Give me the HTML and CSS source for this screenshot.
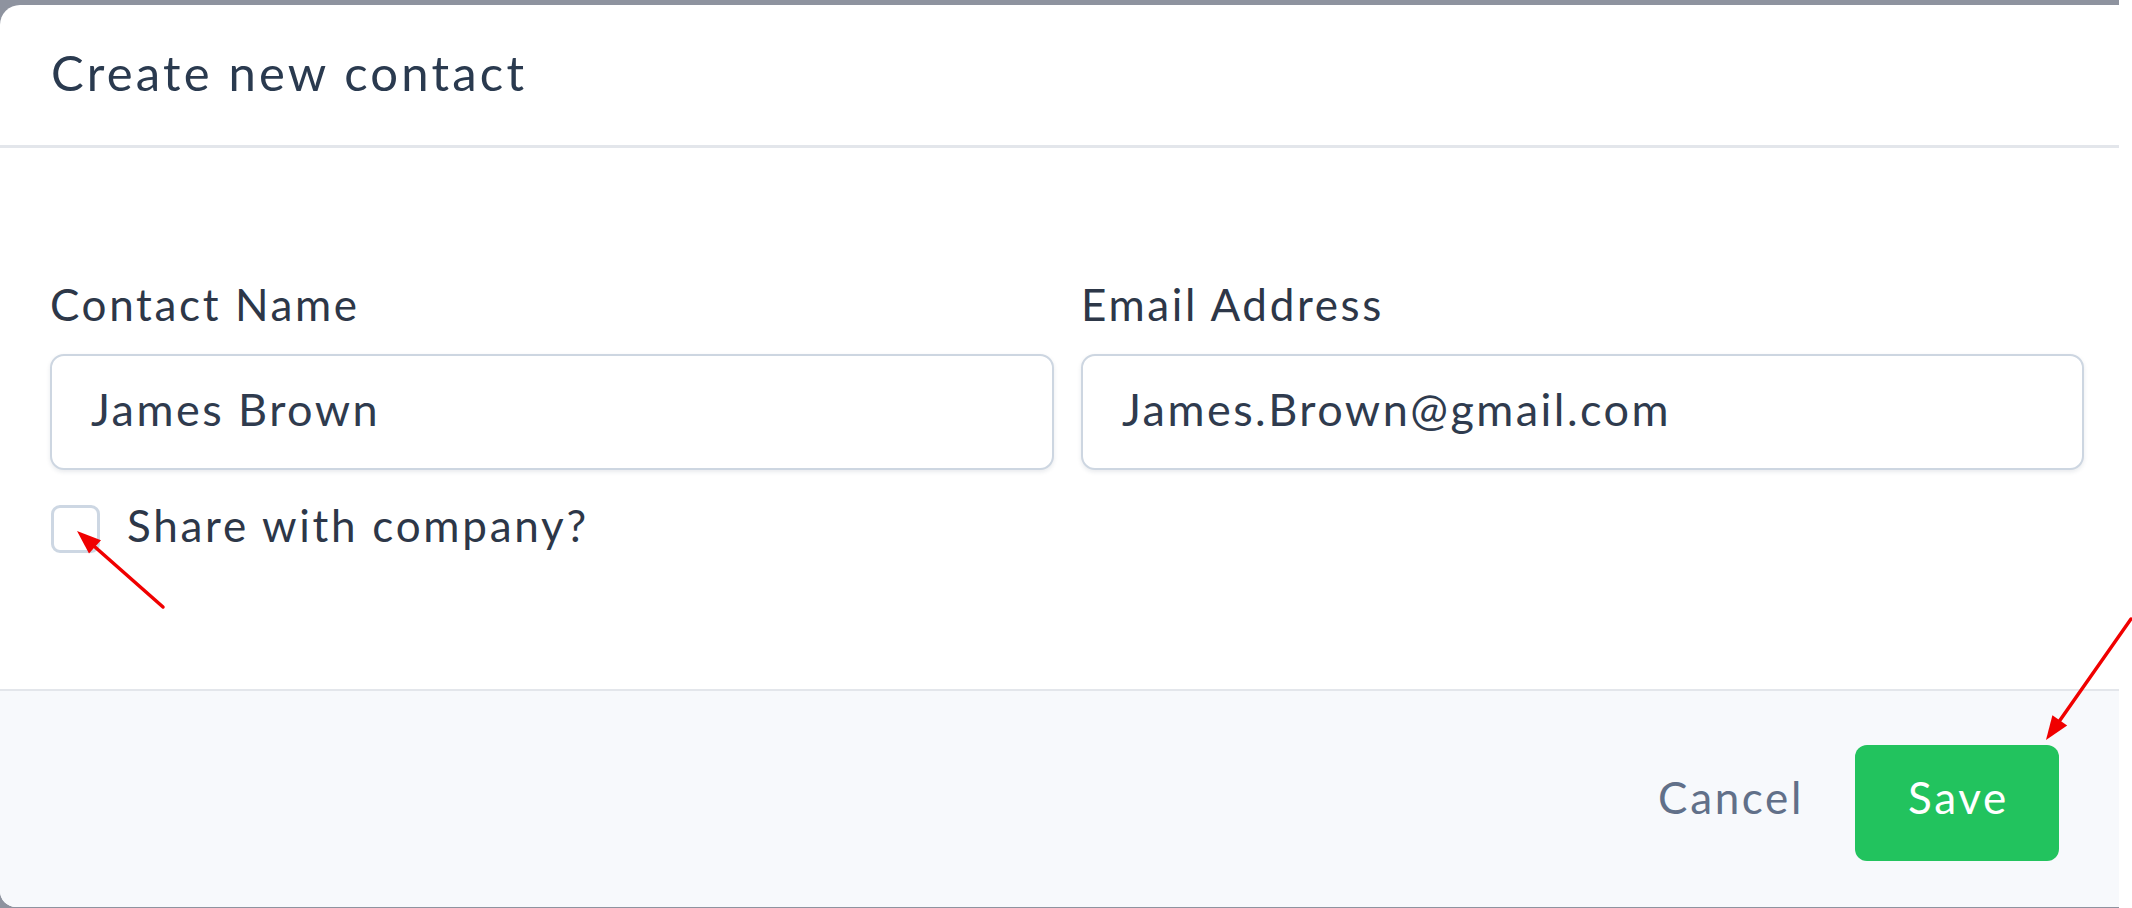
FILE: index.html
```html
<!DOCTYPE html>
<html lang="en">
<head>
<meta charset="utf-8">
<title>Create new contact</title>
<link rel="stylesheet" href="styles.css">
</head>
<body>
<div class="overlay">
  <div class="modal">
    <header class="modal-header">
      <h1 class="modal-title">Create new contact</h1>
    </header>
    <section class="modal-body">
      <div class="fields">
        <div class="field">
          <label class="field-label" for="name">Contact Name</label>
          <input class="field-input" id="name" type="text" value="James Brown">
        </div>
        <div class="field">
          <label class="field-label" for="email">Email Address</label>
          <input class="field-input" id="email" type="text" value="James.Brown@gmail.com">
        </div>
      </div>
      <label class="share">
        <span class="checkbox"></span>
        <span class="share-text">Share with company?</span>
      </label>
    </section>
    <footer class="modal-footer">
      <button class="btn-cancel" type="button">Cancel</button>
      <button class="btn-save" type="button">Save</button>
    </footer>
  </div>
</div>
<svg class="annotations" width="2132" height="908" viewBox="0 0 2132 908">
  <line x1="163" y1="607" x2="95" y2="547" stroke="#f00000" stroke-width="3.5" stroke-linecap="round"/>
  <polygon points="77,531 101,540.2 89,553.6" fill="#f00000"/>
  <line x1="2131" y1="619" x2="2059.8" y2="720.4" stroke="#f00000" stroke-width="3.5" stroke-linecap="round"/>
  <polygon points="2046,740 2067.2,725.6 2052.4,715.2" fill="#f00000"/>
</svg>
</body>
</html>
```

FILE: styles.css
```css
* {
  box-sizing: border-box;
}

html, body {
  margin: 0;
  padding: 0;
  background: #ffffff;
}

body {
  width: 2132px;
  height: 908px;
  overflow: hidden;
  position: relative;
  font-family: "Lato", "Liberation Sans", sans-serif;
  color: #2d3748;
}

.overlay {
  width: 2119px;
  height: 908px;
  background: #8e939f;
  padding-top: 5px;
  padding-bottom: 1px;
}

.modal {
  height: 100%;
  background: #ffffff;
  border-radius: 20px 0 0 16px;
  overflow: hidden;
  display: flex;
  flex-direction: column;
}

.modal-header {
  height: 143px;
  flex: none;
  border-bottom: 3px solid #e3e6eb;
  padding: 38px 0 0 51px;
}

.modal-title {
  margin: 0;
  font-size: 49px;
  line-height: 58px;
  font-weight: 400;
  letter-spacing: 0.065em;
  color: #2a3a4f;
}

.modal-body {
  height: 541px;
  flex: none;
  padding: 130px 35px 0 50px;
}

.fields {
  display: grid;
  grid-template-columns: 1004px 1003px;
  column-gap: 27px;
}

.field {
  display: flex;
  flex-direction: column;
}

.field-label {
  font-size: 44px;
  line-height: 52px;
  letter-spacing: 0.06em;
  color: #2d3748;
  padding-left: 0;
  margin-bottom: 24px;
}

.field-input {
  height: 116px;
  width: 100%;
  border: 2px solid #cdd6e1;
  border-radius: 14px;
  box-shadow: 0 2px 4px rgba(30, 50, 80, 0.10);
  background: #ffffff;
  padding: 0 38px 6px 39px;
  font-family: "Lato", "Liberation Sans", sans-serif;
  font-size: 45px;
  letter-spacing: 0.055em;
  color: #2f3b4e;
  outline: none;
}

.share {
  display: flex;
  align-items: center;
  margin-top: 29px;
  padding-left: 1px;
  gap: 27px;
}

.checkbox {
  width: 49px;
  height: 48px;
  border: 3px solid #cdd7e3;
  border-radius: 9px;
  background: #ffffff;
  flex: none;
}

.share-text {
  font-size: 44px;
  line-height: 52px;
  letter-spacing: 0.062em;
  color: #2d3748;
  padding-bottom: 8px;
}

.modal-footer {
  flex: 1;
  background: #f7f9fc;
  border-top: 2px solid #e3e6eb;
  display: flex;
  justify-content: flex-end;
  align-items: flex-start;
  padding: 54px 60px 0 0;
}

.btn-cancel {
  border: none;
  background: transparent;
  font-family: "Lato", "Liberation Sans", sans-serif;
  font-size: 44px;
  letter-spacing: 0.06em;
  color: #617089;
  height: 116px;
  padding: 0 0 12px 0;
  margin-right: 51px;
  cursor: pointer;
}

.btn-save {
  border: none;
  background: #22c35e;
  color: #ffffff;
  font-family: "Lato", "Liberation Sans", sans-serif;
  font-size: 44px;
  letter-spacing: 0.06em;
  width: 204px;
  height: 116px;
  border-radius: 12px;
  padding: 0 0 12px 3px;
  cursor: pointer;
}

.annotations {
  position: absolute;
  left: 0;
  top: 0;
  pointer-events: none;
}
```
